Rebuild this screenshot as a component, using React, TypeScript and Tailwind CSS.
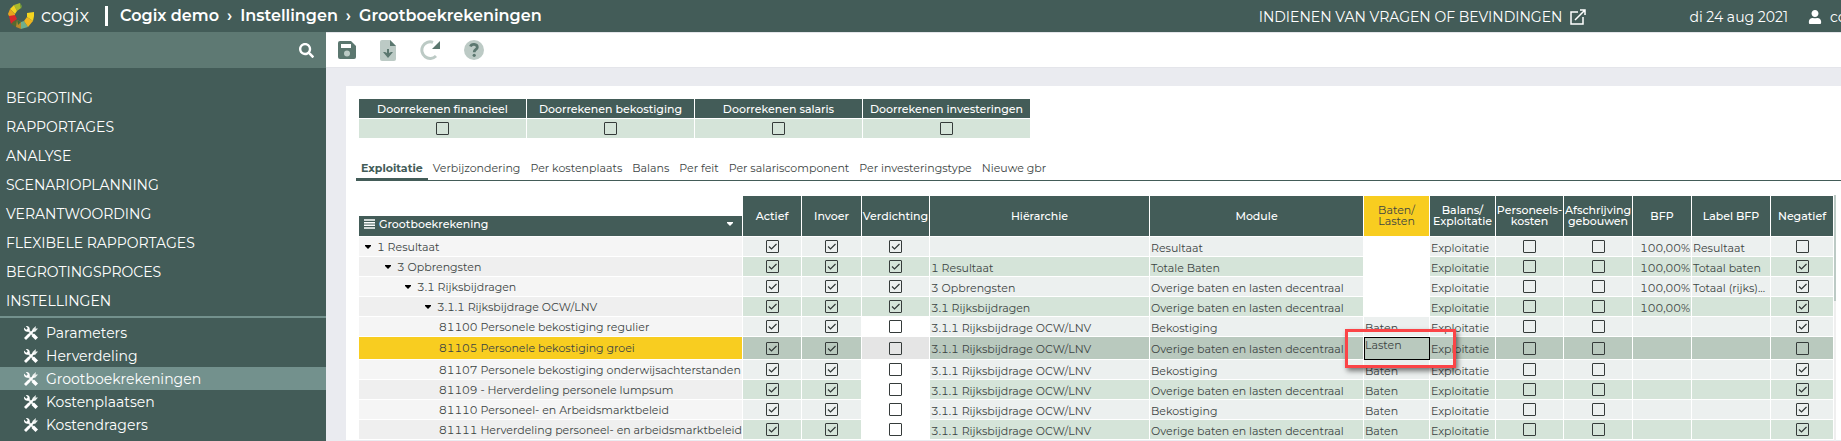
import React from 'react';
import { FaSearch, FaUser } from 'react-icons/fa';
import clsx from 'clsx';

const menu = [
  'Begroting',
  'Rapportages',
  'Analyse',
  'Scenarioplanning',
  'Verantwoording',
  'Flexibele rapportages',
  'Begrotingsproces',
  'Instellingen',
];

const submenu = ['Parameters', 'Herverdeling', 'Grootboekrekeningen', 'Kostenplaatsen', 'Kostendragers', 'Formules'];

const calculations = ['Doorrekenen financieel', 'Doorrekenen bekostiging', 'Doorrekenen salaris', 'Doorrekenen investeringen'];

const tabs = [
  'Exploitatie',
  'Verbijzondering',
  'Per kostenplaats',
  'Balans',
  'Per feit',
  'Per salariscomponent',
  'Per investeringstype',
  'Nieuwe gbr',
];

type Account = {
  name: string;
  level: number;
  parent: string;
  module: string;
  side: string;
  bfp?: string;
  label?: string;
  negative: boolean;
  selected?: boolean;
};

const OCW = '3.1.1 Rijksbijdrage OCW/LNV';
const OVERIGE = 'Overige baten en lasten decentraal';

const accounts: Account[] = [
  { name: '1 Resultaat', level: 0, parent: '', module: 'Resultaat', side: '', bfp: '100,00%', label: 'Resultaat', negative: false },
  { name: '3 Opbrengsten', level: 1, parent: '1 Resultaat', module: 'Totale Baten', side: '', bfp: '100,00%', label: 'Totaal baten', negative: true },
  { name: '3.1 Rijksbijdragen', level: 2, parent: '3 Opbrengsten', module: OVERIGE, side: '', bfp: '100,00%', label: 'Totaal (rijks)...', negative: true },
  { name: OCW, level: 3, parent: '3.1 Rijksbijdragen', module: OVERIGE, side: '', bfp: '100,00%', negative: true },
  { name: '81100 Personele bekostiging regulier', level: 4, parent: OCW, module: 'Bekostiging', side: 'Baten', negative: true },
  { name: '81105 Personele bekostiging groei', level: 4, parent: OCW, module: OVERIGE, side: 'Lasten', negative: false, selected: true },
  { name: '81107 Personele bekostiging onderwijsachterstanden', level: 4, parent: OCW, module: 'Bekostiging', side: 'Baten', negative: true },
  { name: '81109 - Herverdeling personele lumpsum', level: 4, parent: OCW, module: OVERIGE, side: 'Baten', negative: true },
  { name: '81110 Personeel- en Arbeidsmarktbeleid', level: 4, parent: OCW, module: 'Bekostiging', side: 'Baten', negative: true },
  { name: '81111 Herverdeling personeel- en arbeidsmarktbeleid', level: 4, parent: OCW, module: OVERIGE, side: 'Baten', negative: true },
];

const indents = ['pl-[6px]', 'pl-[26px]', 'pl-[46px]', 'pl-[66px]', 'pl-[80px]'];

const CogixLogo = () => (
  <svg viewBox="0 0 26 28" className="h-7 w-[26px]" aria-hidden="true">
    <path d="M6 3 12 1 13 6 9 9Z" fill="#a9b92c" />
    <path d="M12 1 14 4 13 7Z" fill="#6f9a3d" />
    <path d="M2 7 6 3 9 9 7 12Z" fill="#f3d321" />
    <path d="M0 12 2 7 7 12 7 14 1 14Z" fill="#e9a31f" />
    <path d="M1 14 7 13 9 17 3 22Z" fill="#d9262b" />
    <path d="M3 22 6 19 9 18 8 25Z" fill="#57692f" />
    <path d="M8 25 9 18 13 20 13 27Z" fill="#b9892a" />
    <path d="M9 18 13 20 10 23Z" fill="#3d6b3a" />
    <path d="M13 20 16 19 20 25 13 27Z" fill="#6fae8c" />
    <path d="M16 19 19 15 25 19 20 25Z" fill="#f0b41f" />
    <path d="M19 15 19 11 26 10 26 14 25 19Z" fill="#f5d51f" />
  </svg>
);

const SaveIcon = () => (
  <svg viewBox="0 0 18 18" className="size-[18px]" aria-hidden="true">
    <path d="M2 0h11l5 5v11a2 2 0 0 1-2 2H2a2 2 0 0 1-2-2V2a2 2 0 0 1 2-2Z" fill="#5b776f" />
    <path d="M3 3h10v4H3Z" fill="#fff" />
    <circle cx="9" cy="12.5" r="3" fill="#bccac5" />
  </svg>
);

const ExportIcon = () => (
  <svg viewBox="0 0 16 21" className="h-[21px] w-4" aria-hidden="true">
    <path d="M2 0h8l6 6v13a2 2 0 0 1-2 2H2a2 2 0 0 1-2-2V2a2 2 0 0 1 2-2Z" fill="#bccac5" />
    <path d="M10 0l6 6h-6Z" fill="#5b776f" />
    <path d="M7 9h2v4l2-1h2l-5 6-5-6h2l2 1Z" fill="#5b776f" />
  </svg>
);

const RedoIcon = () => (
  <svg viewBox="0 0 20 20" className="size-5" aria-hidden="true">
    <path d="M13 2.3A8.3 8.3 0 1 0 16 16" fill="none" stroke="#bccac5" strokeWidth="3" />
    <path d="M20 1v8h-8Z" fill="#5b776f" />
  </svg>
);

const HelpIcon = () => (
  <svg viewBox="0 0 20 20" className="size-5" aria-hidden="true">
    <circle cx="10" cy="10" r="10" fill="#bccac5" />
    <path d="M6.5 6.5C7.500 3.500 13.300 3.800 13.300 7.300C13.300 9.700 10.200 9.300 10.200 12.300" fill="none" stroke="#5b776f" strokeWidth="2.800" />
    <circle cx="10.2" cy="15.3" r="1.6" fill="#5b776f" />
  </svg>
);

const ExternalIcon = () => (
  <svg viewBox="0 0 16 16" className="size-4" fill="none" stroke="#fff" strokeWidth="1.500" aria-hidden="true">
    <path d="M8 3H1v12h12V8" />
    <path d="M5 11 15 1M10 1h5v5" />
  </svg>
);

const ListIcon = () => (
  <svg viewBox="0 0 11 10" className="h-[10px] w-[11px] shrink-0" fill="none" stroke="currentColor" strokeWidth="1.500" aria-hidden="true">
    <path d="M0 1h11M0 3.700h11M0 6.300h11M0 9h11" />
  </svg>
);

const ToolsIcon = () => (
  <svg viewBox="0 0 14 14" className="size-[14px] shrink-0" aria-hidden="true">
    <path d="M3 3l8 8" stroke="#e9eeec" strokeWidth="2" />
    <path d="M0 1.500 2.500 4 4 2.500 1.800 0C4.500-.5 6.500 2 5.500 4.500L4.500 5.500C2 6.500-.5 4.500 0 1.500Z" fill="#fff" />
    <path d="M7.500 10 10 7.500 14 11.500 11.500 14Z" fill="#fff" />
    <path d="M14 2.500 11 6 8.500 5 8.500 3 12 0 11.500 2.500Z" fill="#e9eeec" />
    <path d="M10 4 2.500 11.500" stroke="#fff" strokeWidth="2" />
    <path d="M0 12 4.500 7.500 6.500 9.500 2 14Z" fill="#fff" />
  </svg>
);

const Caret = ({ className }: { className?: string }) => (
  <svg viewBox="0 0 6 4" className={clsx('h-1 w-[6px] shrink-0', className)} fill="currentColor" aria-hidden="true">
    <path d="M0 0h6v1L3 4 0 1Z" />
  </svg>
);

const Check = ({ label, checked = false }: { label: string; checked?: boolean }) => (
  <span className="grid place-items-center">
    <input
      type="checkbox"
      aria-label={label}
      defaultChecked={checked}
      className="peer col-start-1 row-start-1 size-[13px] appearance-none rounded-[1px] border border-[#353b3a]"
    />
    <svg viewBox="0 0 13 13" className="pointer-events-none col-start-1 row-start-1 hidden size-[13px] peer-checked:block" aria-hidden="true">
      <path d="M3 6.500 5.500 9 10.500 4" fill="none" stroke="#2f3635" strokeWidth="1.200" />
    </svg>
  </span>
);

const HeadCell = ({ children, className }: { children: React.ReactNode; className?: string }) => (
  <th className={clsx('h-[41px] border-r border-b border-white p-0 text-center', className ?? 'bg-[#435c58] font-medium text-white')}>
    {children}
  </th>
);

const AccountRow = ({ account, odd }: { account: Account; odd: boolean }) => {
  const { name, level, selected } = account;
  const isLeaf = level === 4;
  const fill = selected ? 'bg-[#b9c9be]' : odd ? 'bg-[#d5e4d9]' : 'bg-[#ecf0ef]';
  const cell = clsx('overflow-hidden border-r border-b border-white p-0 whitespace-nowrap', fill);
  const text = clsx(cell, 'pt-[2px] pl-px');

  return (
    <tr className={selected ? 'h-[23px]' : 'h-5'}>
      <th
        scope="row"
        className={clsx(
          'overflow-hidden border-r border-b border-white p-0 text-left font-normal whitespace-nowrap',
          selected ? 'bg-[#f8cd20]' : odd ? 'bg-[#efefef]' : 'bg-[#f5f5f5]',
        )}
      >
        <span className={clsx('flex items-center gap-[6px]', indents[level])}>
          {!isLeaf && <Caret className="text-black" />}
          {name}
        </span>
      </th>
      <td className={cell}><Check label={`${name} actief`} checked /></td>
      <td className={cell}><Check label={`${name} invoer`} checked /></td>
      <td className={clsx('border-r border-b border-white p-0', !isLeaf ? fill : selected ? 'bg-[#e5e5e5]' : 'bg-white')}>
        <Check label={`${name} verdichting`} checked={!isLeaf} />
      </td>
      <td className={text}>{account.parent}</td>
      <td className={text}>{account.module}</td>
      <td
        className={clsx(
          'border-r border-b border-white p-0 pl-px',
          isLeaf ? fill : 'bg-white',
          selected ? 'align-top outline -outline-offset-1 outline-black' : 'pt-[2px]',
        )}
      >
        {account.side}
      </td>
      <td className={text}>Exploitatie</td>
      <td className={cell}><Check label={`${name} personeelskosten`} /></td>
      <td className={cell}><Check label={`${name} afschrijving gebouwen`} /></td>
      <td className={clsx(cell, 'pt-[2px] pr-px text-right')}>{account.bfp}</td>
      <td className={text}>{account.label}</td>
      <td className={cell}><Check label={`${name} negatief`} checked={account.negative} /></td>
    </tr>
  );
};

const Sidebar = () => (
  <aside className="w-[326px] shrink-0 bg-[#435c58] text-white">
    <div className="flex h-9 items-center bg-[#5e7973] pr-3">
      <input type="text" aria-label="Zoeken" className="h-full min-w-0 flex-1 bg-transparent px-2 outline-none" />
      <button type="button" aria-label="Zoek"><FaSearch size={15} /></button>
    </div>
    <nav className="pt-4 text-sm">
      <ul className="border-b-2 border-[#73918d]">
        {menu.map((item) => (
          <li key={item}>
            <a href="#" className="block h-[29px] pl-[6px] leading-[29px] uppercase">{item}</a>
          </li>
        ))}
      </ul>
      <ul className="pt-[3px]">
        {submenu.map((item) => (
          <li key={item}>
            <a
              href="#"
              className={clsx('flex h-[23px] items-center gap-2 pl-6', item === 'Grootboekrekeningen' && 'bg-[#73918d]')}
            >
              <ToolsIcon />
              {item}
            </a>
          </li>
        ))}
      </ul>
    </nav>
  </aside>
);

const App = () => {
  return (
    <div className="flex h-screen flex-col overflow-hidden bg-[#eaebf0] font-[Montserrat,Inter,sans-serif]">
      <header className="flex h-8 shrink-0 items-center overflow-hidden bg-[#435c58] pl-2 whitespace-nowrap text-white">
        <CogixLogo />
        <span className="ml-[7px] text-lg">cogix</span>
        <span className="mr-3 ml-4 h-5 w-[3px] bg-white" />
        <nav className="flex items-center gap-2 text-base font-semibold">
          <a href="#">Cogix demo</a>
          <span>›</span>
          <a href="#">Instellingen</a>
          <span>›</span>
          <a href="#">Grootboekrekeningen</a>
        </nav>
        <div className="ml-auto flex items-center pt-[2px] text-sm">
          <a href="#" className="flex items-center gap-2">
            INDIENEN VAN VRAGEN OF BEVINDINGEN
            <ExternalIcon />
          </a>
          <span className="ml-[103px]">di 24 aug 2021</span>
          <span className="ml-5 flex w-[33px] shrink-0 items-center gap-2 overflow-hidden">
            <FaUser size={14} className="shrink-0" />
            cogix
          </span>
        </div>
      </header>

      <div className="flex min-h-0 flex-1">
        <Sidebar />
        <main className="min-w-0 flex-1">
          <div className="flex h-9 items-center gap-6 border-t border-b border-[#e4e5ea] bg-white pl-3">
            <button type="button" aria-label="Opslaan"><SaveIcon /></button>
            <button type="button" aria-label="Exporteren"><ExportIcon /></button>
            <button type="button" aria-label="Vernieuwen"><RedoIcon /></button>
            <button type="button" aria-label="Help"><HelpIcon /></button>
          </div>

          <section className="mt-[18px] ml-5 bg-white pt-[13px] pl-[10px] text-[11px] leading-4 text-[#3c4443] tabular-nums">
            <table className="ml-[3px] w-[672px] table-fixed border-separate border-spacing-0">
              <thead>
                <tr>
                  {calculations.map((title) => (
                    <th key={title} className="h-5 border-r border-b border-white bg-[#435c58] p-0 font-medium text-white">
                      {title}
                    </th>
                  ))}
                </tr>
              </thead>
              <tbody>
                <tr>
                  {calculations.map((title) => (
                    <td key={title} className="h-5 border-r border-b border-white bg-[#d5e4d9] p-0">
                      <Check label={title} />
                    </td>
                  ))}
                </tr>
              </tbody>
            </table>

            <div role="tablist" className="mt-[19px] flex h-[23px] border-b border-[#435c58]">
              {tabs.map((tab, index) => (
                <button
                  key={tab}
                  type="button"
                  role="tab"
                  aria-selected={index === 0}
                  className={clsx('border-b-2 px-[5px]', index === 0 ? 'border-[#435c58] font-bold text-[#435c58]' : 'border-transparent')}
                >
                  {tab}
                </button>
              ))}
            </div>

            <div className="mt-[14px] ml-[3px] flex">
              <div className="relative min-w-0 flex-1 pt-px">
                <table className="w-full table-fixed border-separate border-spacing-0">
                  <colgroup>
                    <col />
                    <col className="w-[59px]" />
                    <col className="w-[60px]" />
                    <col className="w-[68px]" />
                    <col className="w-[220px]" />
                    <col className="w-[214px]" />
                    <col className="w-[66px]" />
                    <col className="w-[66px]" />
                    <col className="w-[68px]" />
                    <col className="w-[69px]" />
                    <col className="w-[59px]" />
                    <col className="w-[79px]" />
                    <col className="w-[63px]" />
                  </colgroup>
                  <thead className="leading-[11px]">
                    <tr>
                      <th className="border-r border-b border-white p-0 align-bottom font-medium text-white">
                        <span className="flex h-5 items-center gap-1 bg-[#435c58] pr-[9px] pb-1 pl-[5px]">
                          <ListIcon />
                          Grootboekrekening
                          <Caret className="ml-auto" />
                        </span>
                      </th>
                      <HeadCell>Actief</HeadCell>
                      <HeadCell>Invoer</HeadCell>
                      <HeadCell>Verdichting</HeadCell>
                      <HeadCell>Hiërarchie</HeadCell>
                      <HeadCell>Module</HeadCell>
                      <HeadCell className="bg-[#f8cd20] font-normal text-[#3c4443]">Baten/<br />Lasten</HeadCell>
                      <HeadCell>Balans/<br />Exploitatie</HeadCell>
                      <HeadCell>Personeels-<br />kosten</HeadCell>
                      <HeadCell>Afschrijving<br />gebouwen</HeadCell>
                      <HeadCell>BFP</HeadCell>
                      <HeadCell>Label BFP</HeadCell>
                      <HeadCell>Negatief</HeadCell>
                    </tr>
                  </thead>
                  <tbody>
                    {accounts.map((account, index) => (
                      <AccountRow key={account.name} account={account} odd={index % 2 === 1} />
                    ))}
                  </tbody>
                </table>
                {/* callout around the selected cell */}
                <div className="pointer-events-none absolute top-[134px] right-[378px] h-[39px] w-[111px] border-3 border-[#fb4447] shadow-[2px_3px_5px_rgba(0,0,0,0.5)]" />
              </div>
              <div className="w-[7px] shrink-0">
                <div className="mr-[5px] h-[106px] bg-[#bccac5]" />
                <div className="mr-[5px] h-full bg-[#efefef]" />
              </div>
            </div>
          </section>
        </main>
      </div>
    </div>
  );
};

export default App;
